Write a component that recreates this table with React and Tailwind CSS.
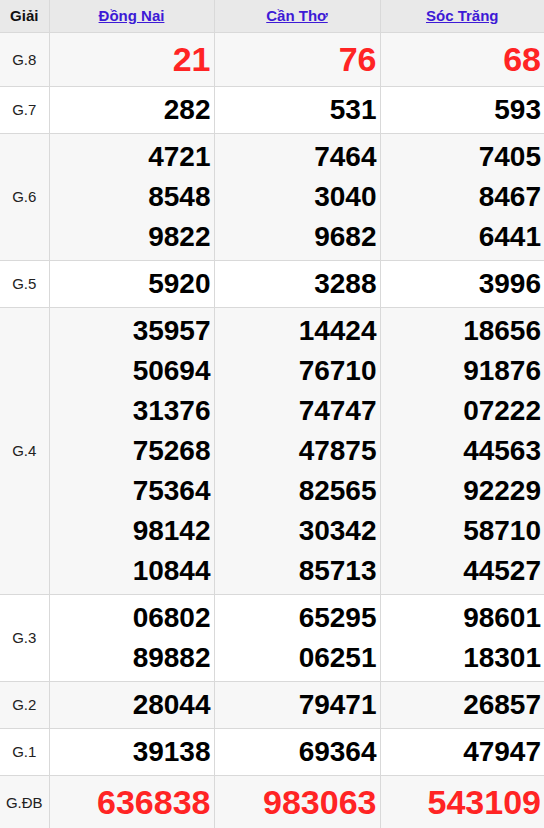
import React from 'react';

const provinces = ['Đồng Nai', 'Cần Thơ', 'Sóc Trăng'];

const rows = [
    { label: 'G.8', red: true, values: [['21'], ['76'], ['68']] },
    { label: 'G.7', values: [['282'], ['531'], ['593']] },
    { label: 'G.6', values: [['4721', '8548', '9822'], ['7464', '3040', '9682'], ['7405', '8467', '6441']] },
    { label: 'G.5', values: [['5920'], ['3288'], ['3996']] },
    {
        label: 'G.4',
        values: [
            ['35957', '50694', '31376', '75268', '75364', '98142', '10844'],
            ['14424', '76710', '74747', '47875', '82565', '30342', '85713'],
            ['18656', '91876', '07222', '44563', '92229', '58710', '44527'],
        ],
    },
    { label: 'G.3', values: [['06802', '89882'], ['65295', '06251'], ['98601', '18301']] },
    { label: 'G.2', values: [['28044'], ['79471'], ['26857']] },
    { label: 'G.1', values: [['39138'], ['69364'], ['47947']] },
    { label: 'G.ĐB', red: true, values: [['636838'], ['983063'], ['543109']] },
];

export default function App() {
    return (
        <div className="w-[544px] h-[828px] overflow-hidden bg-white font-['Liberation_Sans',Arial,sans-serif]">
            <table className="w-full table-fixed border-collapse">
                <colgroup>
                    <col className="w-[49px]" />
                    <col className="w-[165px]" />
                    <col className="w-[166px]" />
                    <col />
                </colgroup>
                <thead>
                    <tr className="h-[32px] bg-[#e9e9e9]">
                        <th className="border-r border-b border-[#d9d9d9] text-[15px] font-bold text-[#111] text-center">Giải</th>
                        {provinces.map(p => (
                            <th key={p} className="border-r border-b border-[#d9d9d9] last:border-r-0 text-center">
                                <a href="#" className="text-[15px] font-bold underline text-[#3d1ad6]">{p}</a>
                            </th>
                        ))}
                    </tr>
                </thead>
                <tbody>
                    {rows.map((row, idx) => (
                        <tr key={row.label} className={idx % 2 === 0 ? 'bg-[#f7f7f7]' : 'bg-white'}>
                            <td className="border-r border-b border-[#d9d9d9] text-[15px] text-[#222] text-center align-middle pt-[2px]">
                                {row.label}
                            </td>
                            {row.values.map((nums, i) => (
                                <td key={i} className="border-r border-b border-[#d9d9d9] last:border-r-0 text-right align-middle pr-[3px] py-[3px]">
                                    {nums.map(n => (
                                        <div
                                            key={n}
                                            className={row.red
                                                ? 'text-[34px] leading-[47px] font-bold text-[#ff2424]'
                                                : 'text-[28px] leading-[40px] font-bold text-black'}
                                        >
                                            {n}
                                        </div>
                                    ))}
                                </td>
                            ))}
                        </tr>
                    ))}
                </tbody>
            </table>
        </div>
    );
}
